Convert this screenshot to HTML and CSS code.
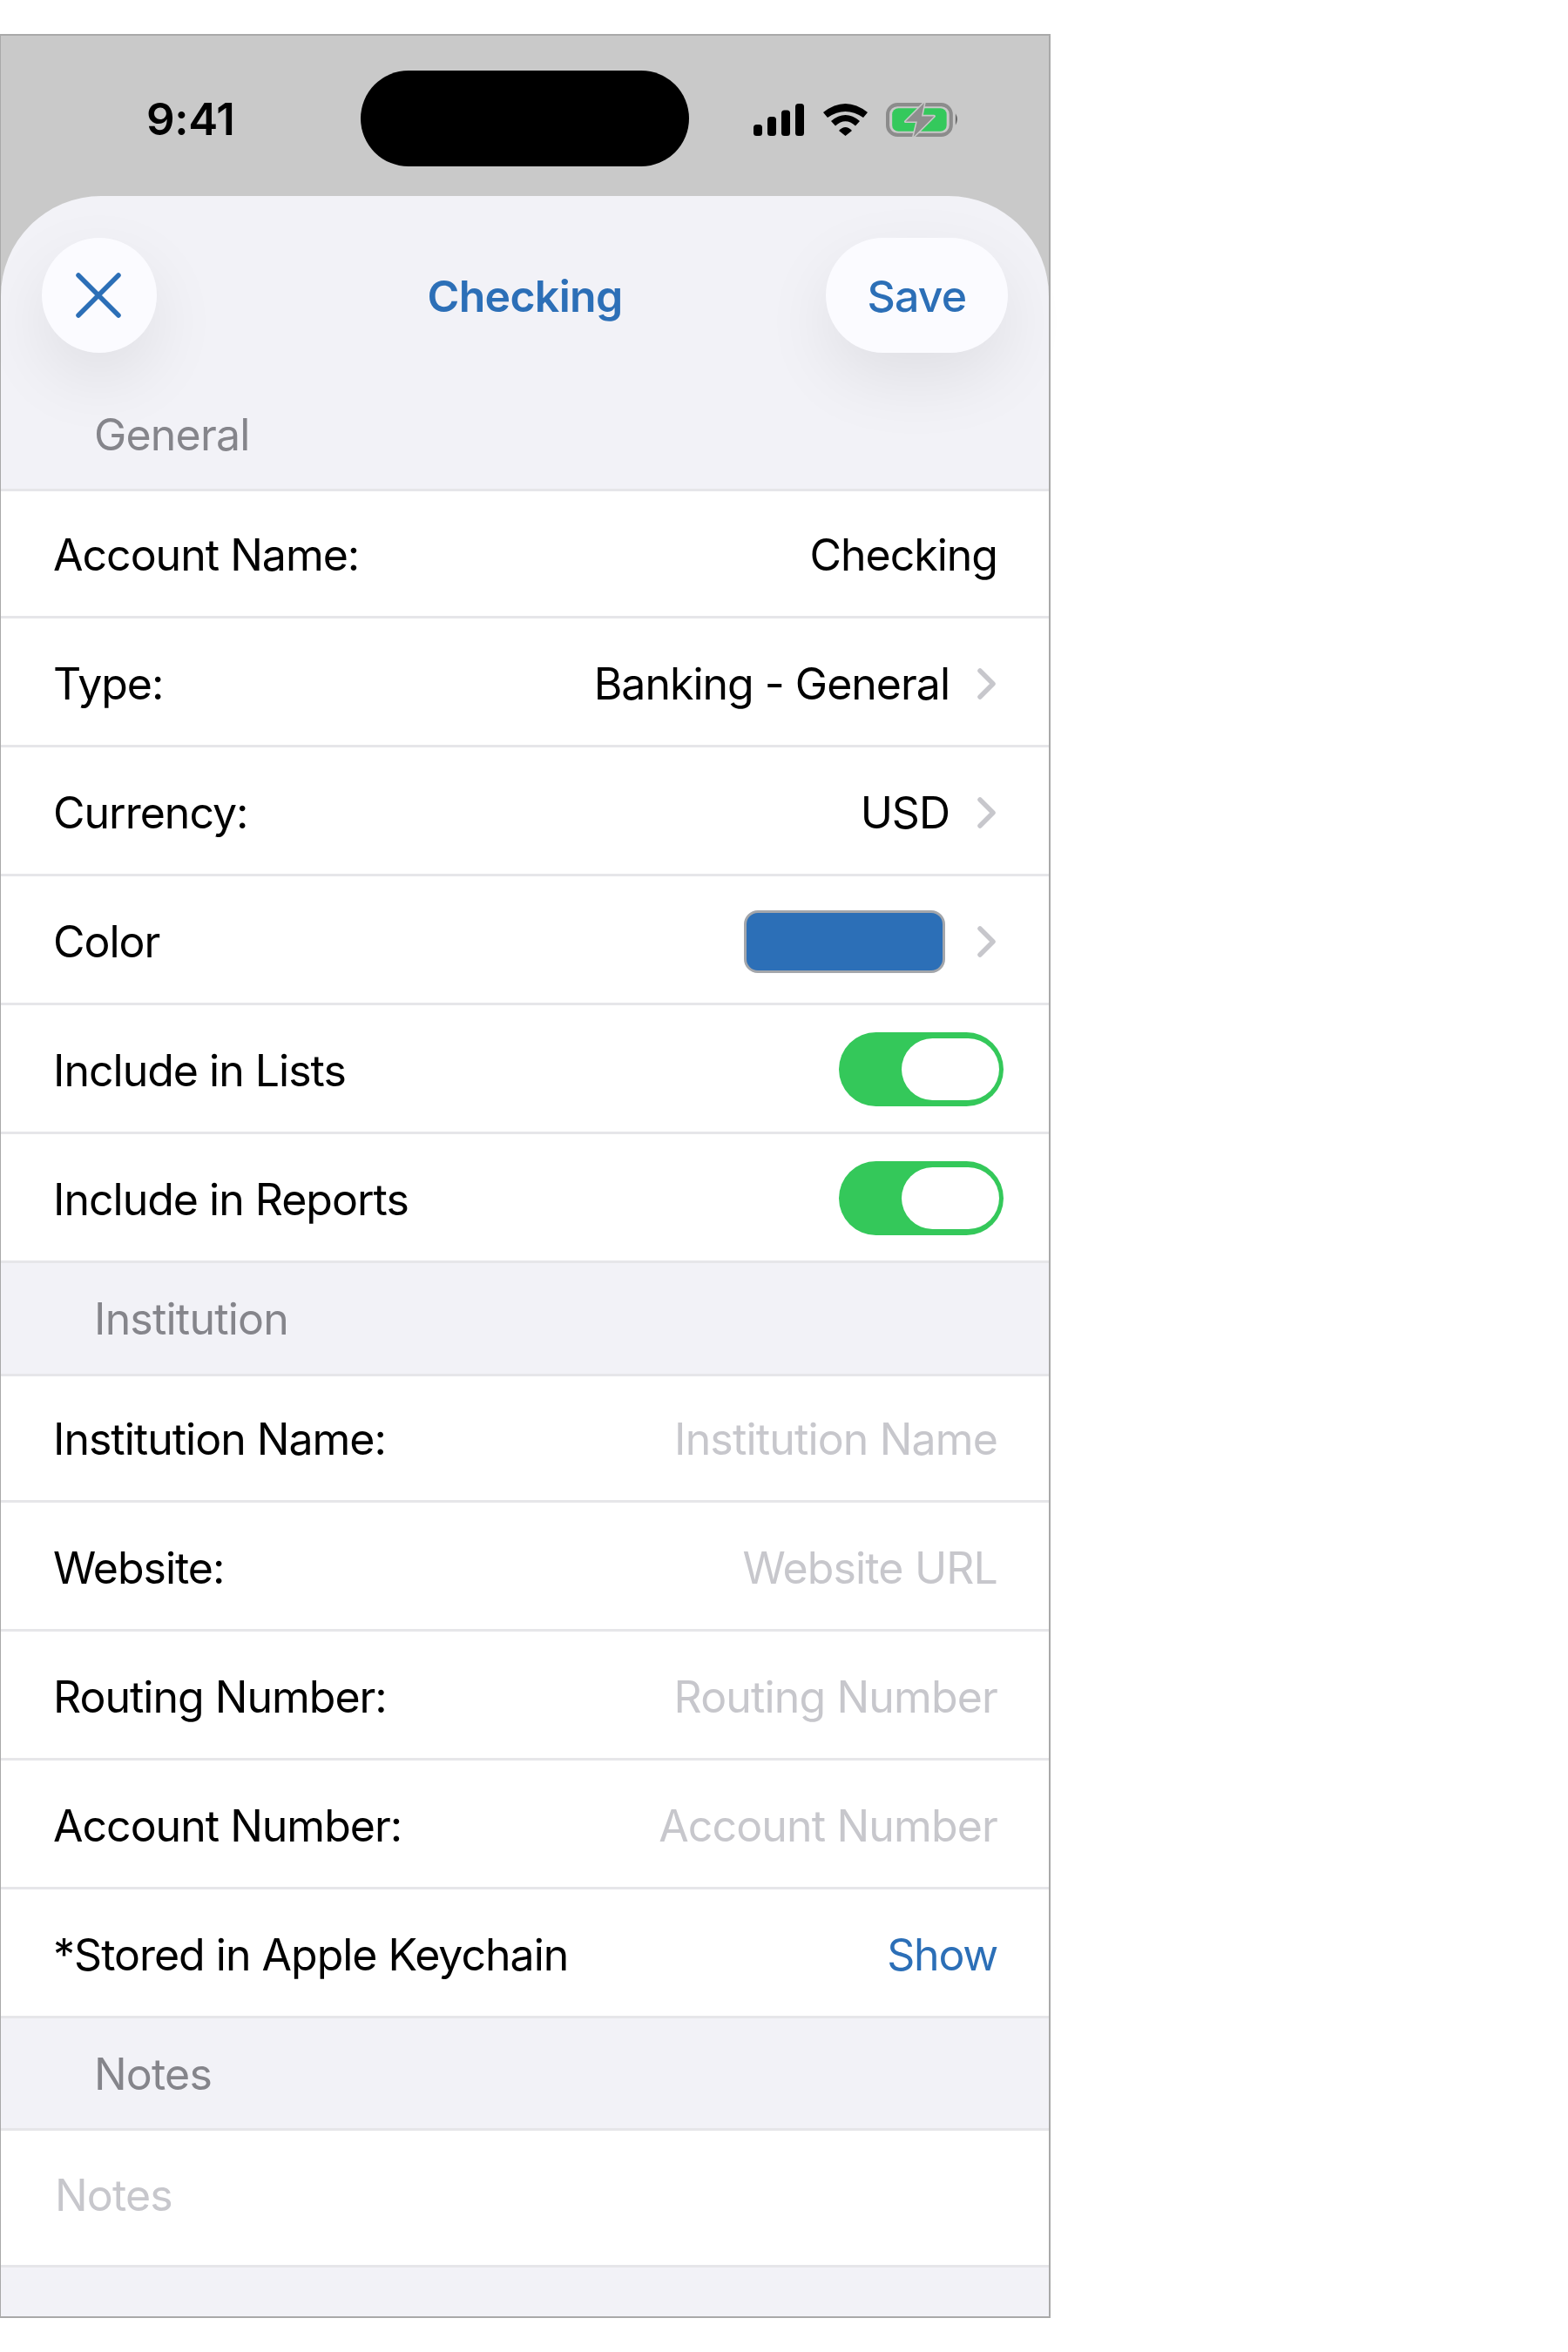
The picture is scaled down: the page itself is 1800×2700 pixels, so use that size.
FILE: index.html
```html
<!DOCTYPE html>
<html lang="en">
<head>
    <meta charset="UTF-8" />
    <title>Checking</title>
    <link rel="stylesheet" href="styles.css">
</head>
<body>
    <div class="phone">
        <header class="status-bar">
            <span class="time">9:41</span>
            <div class="island"></div>
            <div class="status-icons">
                <svg class="signal" viewBox="0 0 58 37">
                    <rect x="0" y="24" width="10" height="13" rx="3.5" />
                    <rect x="16" y="15" width="10" height="22" rx="3.5" />
                    <rect x="32" y="7.5" width="10" height="29.5" rx="3.5" />
                    <rect x="48" y="0" width="10" height="37" rx="3.5" />
                </svg>
                <svg class="wifi" viewBox="0 0 51 37">
                    <path d="M0 10Q25.5 -10 51 10L46 16Q25.5 2 5 16Z" />
                    <path d="M9 20Q25.5 6 42 20L37 25.5Q25.5 15 14 25.5Z" />
                    <path d="M18 31Q25.5 23 33 31L25.5 37Z" />
                </svg>
                <svg class="battery" viewBox="0 0 82 40">
                    <rect x="2" y="3" width="71" height="34" rx="11" fill="none" stroke="#8c8c8c" stroke-width="4" />
                    <rect x="7" y="7" width="61" height="26" rx="7" fill="#34c95c" />
                    <path d="M78 13Q82 19.500 78 26Z" fill="#666666" />
                    <path d="M43 1L22 22H35L31 39L54 16H40Z" fill="#8e8e8e" stroke="#c9c9c9" stroke-width="3" paint-order="stroke" stroke-linejoin="round" />
                </svg>
            </div>
        </header>

        <main class="sheet">
            <nav class="sheet-nav">
                <button class="nav-close">
                    <svg viewBox="0 0 52 52">
                        <path d="M3 3L49 49M49 3L3 49" />
                    </svg>
                </button>
                <h1 class="nav-title">Checking</h1>
                <button class="nav-save">Save</button>
            </nav>

            <h2 class="section-title section-general">General</h2>
            <div class="row row-account">
                <span>Account Name:</span>
                <span>Checking</span>
            </div>
            <div class="row">
                <span>Type:</span>
                <span class="row-value">Banking - General
                    <svg class="chevron" viewBox="0 0 21 36"><path d="M3 3L18 18L3 33" /></svg>
                </span>
            </div>
            <div class="row">
                <span>Currency:</span>
                <span class="row-value">USD
                    <svg class="chevron" viewBox="0 0 21 36"><path d="M3 3L18 18L3 33" /></svg>
                </span>
            </div>
            <div class="row">
                <span>Color</span>
                <span class="row-value">
                    <span class="swatch"></span>
                    <svg class="chevron" viewBox="0 0 21 36"><path d="M3 3L18 18L3 33" /></svg>
                </span>
            </div>
            <div class="row">
                <span>Include in Lists</span>
                <span class="toggle"><span class="knob"></span></span>
            </div>
            <div class="row">
                <span>Include in Reports</span>
                <span class="toggle"><span class="knob"></span></span>
            </div>

            <h2 class="section-title section-institution">Institution</h2>
            <div class="row row-institution">
                <span>Institution Name:</span>
                <span class="placeholder">Institution Name</span>
            </div>
            <div class="row">
                <span>Website:</span>
                <span class="placeholder">Website URL</span>
            </div>
            <div class="row">
                <span>Routing Number:</span>
                <span class="placeholder">Routing Number</span>
            </div>
            <div class="row">
                <span>Account Number:</span>
                <span class="placeholder">Account Number</span>
            </div>
            <div class="row">
                <span>*Stored in Apple Keychain</span>
                <span class="link">Show</span>
            </div>

            <h2 class="section-title section-notes">Notes</h2>
            <div class="row row-notes">
                <span class="placeholder">Notes</span>
            </div>
            <div class="sheet-end"></div>
        </main>
    </div>
</body>
</html>
```

FILE: styles.css
```css
* {
    margin: 0;
    padding: 0;
    box-sizing: border-box;
}
body {
    background-color: #ffffff;
    font-family: Inter, "Liberation Sans", sans-serif;
    font-size: 50px;
    letter-spacing: -1px;
    color: #000000;
}
.phone {
    width: 1206px;
    margin-top: 39px;
    border: 2px solid #a9a9a9;
    border-width: 2px 2px 2px 1px;
    background-color: #c9c9c9;
}
.status-bar {
    height: 184px;
    padding-top: 40px;
    position: relative;
    display: flex;
    justify-content: center;
}
.time {
    position: absolute;
    left: 167px;
    top: 66px;
    font-size: 51px;
    font-weight: 600;
    line-height: 60px;
    letter-spacing: -0.3px;
}
.island {
    width: 377px;
    height: 110px;
    background-color: #000000;
    border-radius: 55px;
}
.status-icons {
    position: absolute;
    left: 864px;
    top: 76px;
    display: flex;
    align-items: center;
}
.signal {
    width: 58px;
    height: 37px;
    margin-right: 22px;
}
.wifi {
    width: 51px;
    height: 37px;
    margin-right: 21px;
}
.battery {
    width: 84px;
    height: 41px;
}
.sheet {
    background-color: #f2f2f7;
    border-radius: 115px 115px 0 0;
    padding-top: 48px;
}
.sheet-nav {
    display: grid;
    grid-template-columns: 1fr auto 1fr;
    align-items: center;
    padding: 0 47px;
}
.nav-close,
.nav-save {
    height: 132px;
    border: none;
    background-color: #fbfbff;
    box-shadow: 0 30px 80px rgba(0, 0, 0, 0.08);
    color: #2c6fb7;
    font-family: inherit;
    display: flex;
    align-items: center;
    justify-content: center;
}
.nav-close {
    width: 132px;
    border-radius: 50%;
}
.nav-close svg {
    width: 52px;
    height: 52px;
    margin-right: 3px;
    fill: none;
    stroke: #2c6fb7;
    stroke-width: 5.500;
    stroke-linecap: round;
}
.nav-save {
    width: 209px;
    padding-top: 2px;
    border-radius: 66px;
    justify-self: end;
    font-size: 50px;
    font-weight: 500;
    letter-spacing: -0.8px;
}
.nav-title {
    padding-top: 1px;
    color: #2c6fb7;
    font-size: 50px;
    font-weight: 600;
    letter-spacing: -0.7px;
}
.section-title {
    padding: 0 0 0 107px;
    display: flex;
    align-items: center;
    border-bottom: 3px solid #e6e6e9;
    color: #85858b;
    font-size: 50px;
    font-weight: 400;
    letter-spacing: -0.8px;
}
.section-general {
    height: 129px;
    margin-top: 30px;
    padding-top: 2px;
}
.section-institution {
    height: 130px;
}
.section-notes {
    height: 129px;
    padding-top: 2px;
}
.row {
    height: 148px;
    padding: 5px 59px 0 60px;
    display: flex;
    align-items: center;
    justify-content: space-between;
    background-color: #ffffff;
    border-bottom: 3px solid #e6e6e9;
}
.row-account {
    height: 146px;
    padding-top: 2px;
}
.row-institution {
    height: 145px;
    padding-top: 1px;
}
.row-notes {
    height: 157px;
    padding: 0 59px 6px 62px;
}
.row-value {
    display: flex;
    align-items: center;
    gap: 32px;
}
.chevron {
    width: 21px;
    height: 36px;
    margin-right: 2px;
    fill: none;
    stroke: #c7c7cc;
    stroke-width: 5.500;
    stroke-linecap: round;
    stroke-linejoin: round;
}
.swatch {
    width: 231px;
    height: 72px;
    margin-right: 5px;
    background-color: #2c6fb7;
    border: 3px solid #a3a6ab;
    border-radius: 16px;
}
.toggle {
    width: 189px;
    height: 85px;
    margin-right: -7px;
    margin-top: -3px;
    padding: 7px 5px;
    display: flex;
    justify-content: flex-end;
    background-color: #34c85a;
    border-radius: 43px;
}
.knob {
    width: 112px;
    height: 71px;
    background-color: #ffffff;
    border-radius: 36px;
}
.placeholder {
    color: #c7c7cc;
    letter-spacing: -0.85px;
}
.link {
    color: #2c6fb7;
    letter-spacing: -1.2px;
}
.sheet-end {
    height: 56px;
}
```
